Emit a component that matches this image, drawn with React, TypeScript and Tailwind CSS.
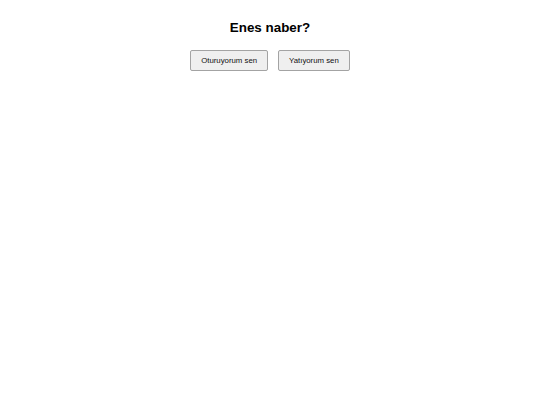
export default function App() {
  return (
    <div className="min-h-screen bg-white pt-[20px] text-center font-['Liberation_Sans',Arial,sans-serif] text-black">
      <h1 className="text-[13.4px] font-bold leading-[16px]">Enes naber?</h1>
      <div className="mt-[14px] flex justify-center gap-[10px]">
        <button className="h-[21px] rounded-[2px] border border-[#a3a3a3] bg-[#efefef] px-[10px] text-[7.8px] leading-[19px] text-[#111]">
          Oturuyorum sen
        </button>
        <button className="h-[21px] rounded-[2px] border border-[#a3a3a3] bg-[#efefef] px-[10px] text-[7.8px] leading-[19px] text-[#111]">
          Yatıyorum sen
        </button>
      </div>
    </div>
  );
}
